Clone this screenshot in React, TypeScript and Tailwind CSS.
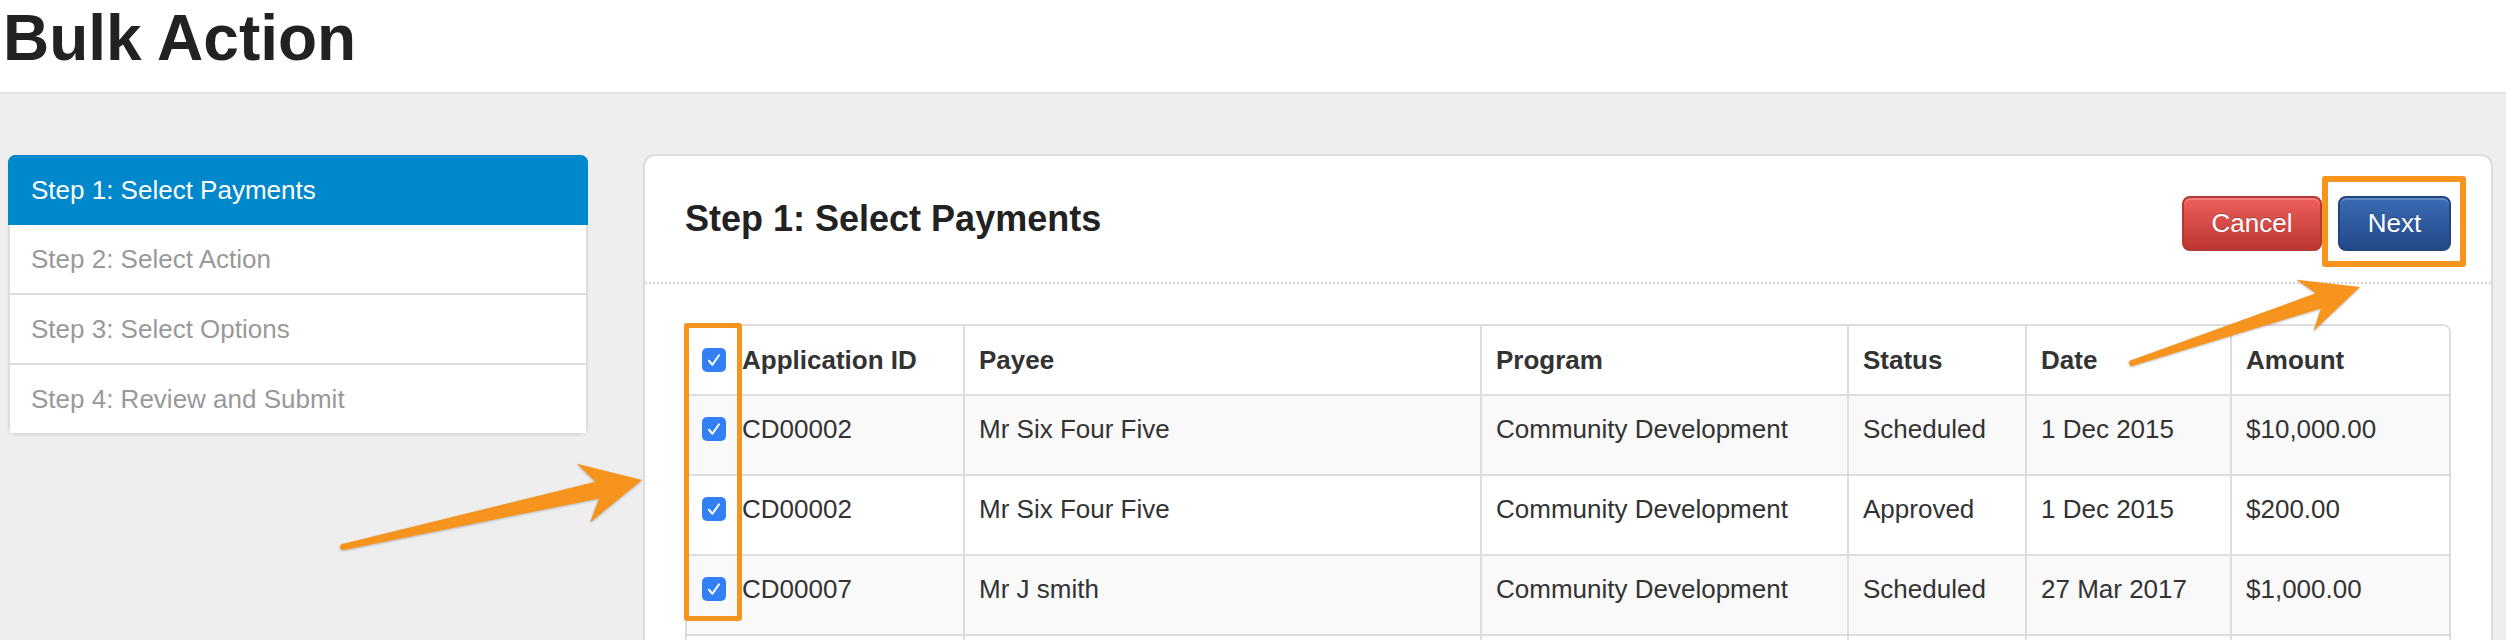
import React from 'react';

const steps = [
  'Step 1: Select Payments',
  'Step 2: Select Action',
  'Step 3: Select Options',
  'Step 4: Review and Submit',
];

const payments = [
  { id: 'CD00002', payee: 'Mr Six Four Five', program: 'Community Development', status: 'Scheduled', date: '1 Dec 2015', amount: '$10,000.00' },
  { id: 'CD00002', payee: 'Mr Six Four Five', program: 'Community Development', status: 'Approved', date: '1 Dec 2015', amount: '$200.00' },
  { id: 'CD00007', payee: 'Mr J smith', program: 'Community Development', status: 'Scheduled', date: '27 Mar 2017', amount: '$1,000.00' },
];

type Pt = [number, number];

// tapered annotation arrow, tail -> tip
function arrowPoints(tail: Pt, tip: Pt, headLen: number, headHalf: number, neck: number, shaftW: number, tailW: number) {
  const dx = tip[0] - tail[0];
  const dy = tip[1] - tail[1];
  const len = Math.hypot(dx, dy);
  const ux = dx / len;
  const uy = dy / len;
  const nx = -uy;
  const ny = ux;
  const at = (back: number, side: number): Pt => [tip[0] - ux * back + nx * side, tip[1] - uy * back + ny * side];
  const pts: Pt[] = [
    tip,
    at(headLen, headHalf),
    at(neck, shaftW / 2),
    [tail[0] + nx * (tailW / 2), tail[1] + ny * (tailW / 2)],
    [tail[0] - nx * (tailW / 2), tail[1] - ny * (tailW / 2)],
    at(neck, -shaftW / 2),
    at(headLen, -headHalf),
  ];
  return pts.map((p) => p.map((v) => v.toFixed(1)).join(',')).join(' ');
}

function Tick() {
  return (
    <span className="inline-flex h-[24px] w-[24px] shrink-0 items-center justify-center rounded-[5px] bg-[#3380f6]">
      <svg viewBox="0 0 24 24" className="h-[22px] w-[22px]" fill="none" stroke="white" strokeWidth={2.2} strokeLinecap="round" strokeLinejoin="round">
        <path d="M6.5 12.8l3.8 4.4L17.5 6.8" />
      </svg>
    </span>
  );
}

export default function App() {
  const cell = 'border-l-2 border-[#dddddd] px-[14px] text-left';

  return (
    <div className="relative h-[640px] w-[2506px] overflow-hidden bg-[#eeeeee] font-['Liberation_Sans',Arial,sans-serif] text-[#333333]">
      {/* Page title */}
      <div className="h-[94px] border-b-2 border-[#e3e3e3] bg-white pl-[3px] pt-[6px]">
        <h1 className="text-[64px] font-bold leading-[64px] text-[#222222]">Bulk Action</h1>
      </div>

      <div className="flex items-start gap-[55px] pl-[8px] pr-[13px] pt-[61px]">
        {/* Wizard steps */}
        <div className="w-[580px] shrink-0 overflow-hidden rounded-[8px] bg-white shadow-[0_1px_2px_rgba(0,0,0,0.06)]">
          {steps.map((step, i) => (
            <div
              key={step}
              className={
                i === 0
                  ? 'flex h-[70px] items-center border-2 border-[#0088cc] bg-[#0088cc] pl-[21px] text-[26px] text-white'
                  : 'flex h-[70px] items-center border-x-2 border-b-2 border-[#dddddd] pl-[21px] text-[26px] text-[#999999]'
              }
            >
              {step}
            </div>
          ))}
        </div>

        {/* Main panel */}
        <div className="-mt-[1px] flex-1 rounded-[12px] border-2 border-[#dcdcdc] bg-white">
          <div className="flex h-[128px] items-center justify-between border-b-2 border-dotted border-[#d3d3d3] px-[40px]">
            <h2 className="text-[36px] font-bold text-[#222222]">Step 1: Select Payments</h2>
            <div className="mt-[9px] flex gap-[16px]">
              <button className="flex h-[55px] w-[140px] items-center justify-center rounded-[8px] border-2 border-[#b33a33] bg-linear-to-b from-[#ee5f5b] to-[#bd362f] text-[26px] text-white shadow-[inset_0_2px_0_rgba(255,255,255,0.2)] [text-shadow:0_-1px_0_rgba(0,0,0,0.25)]">
                Cancel
              </button>
              <div className="relative">
                <button className="flex h-[55px] w-[113px] items-center justify-center rounded-[8px] border-2 border-[#21477f] bg-linear-to-b from-[#3a6bb3] to-[#24498a] text-[26px] text-white shadow-[inset_0_2px_0_rgba(255,255,255,0.2)] [text-shadow:0_-1px_0_rgba(0,0,0,0.25)]">
                  Next
                </button>
                <div className="pointer-events-none absolute -left-[16px] -top-[20px] h-[91px] w-[144px] rounded-[3px] border-[6px] border-[#f7941e]" />
              </div>
            </div>
          </div>

          <div className="px-[40px] pt-[40px]">
            <div className="relative">
              <div className="overflow-hidden rounded-[8px] border-2 border-[#dddddd]">
                <table className="w-full table-fixed border-separate border-spacing-0 text-[26px]">
                  <thead>
                    <tr className="bg-white">
                      <th className="h-[68px] w-[276px] pl-[15px] text-left font-bold">
                        <div className="flex items-center">
                          <Tick />
                          <span className="ml-[16px]">Application ID</span>
                        </div>
                      </th>
                      <th className={`${cell} w-[517px] font-bold`}>Payee</th>
                      <th className={`${cell} w-[367px] font-bold`}>Program</th>
                      <th className={`${cell} w-[178px] font-bold`}>Status</th>
                      <th className={`${cell} w-[205px] font-bold`}>Date</th>
                      <th className={`${cell} font-bold`}>Amount</th>
                    </tr>
                  </thead>
                  <tbody>
                    {payments.map((p, i) => (
                      <tr key={i} className={i % 2 === 0 ? 'bg-[#f9f9f9]' : 'bg-white'}>
                        <td className="h-[80px] border-t-2 border-[#dddddd] pb-[12px] pl-[15px]">
                          <div className="flex items-center">
                            <Tick />
                            <span className="ml-[16px]">{p.id}</span>
                          </div>
                        </td>
                        <td className={`${cell} border-t-2 pb-[12px]`}>{p.payee}</td>
                        <td className={`${cell} border-t-2 pb-[12px]`}>{p.program}</td>
                        <td className={`${cell} border-t-2 pb-[12px]`}>{p.status}</td>
                        <td className={`${cell} border-t-2 pb-[12px]`}>{p.date}</td>
                        <td className={`${cell} border-t-2 pb-[12px]`}>{p.amount}</td>
                      </tr>
                    ))}
                    {/* next row, below the fold */}
                    <tr className="bg-white">
                      <td className="h-[80px] border-t-2 border-[#dddddd]" />
                      <td className={`${cell} border-t-2`} />
                      <td className={`${cell} border-t-2`} />
                      <td className={`${cell} border-t-2`} />
                      <td className={`${cell} border-t-2`} />
                      <td className={`${cell} border-t-2`} />
                    </tr>
                  </tbody>
                </table>
              </div>
              {/* highlight around the checkbox column */}
              <div className="pointer-events-none absolute -left-[1px] -top-[1px] h-[298px] w-[58px] rounded-[3px] border-[5px] border-[#f7941e]" />
            </div>
          </div>
        </div>
      </div>

      {/* annotation arrows */}
      <svg
        className="pointer-events-none absolute left-0 top-0 [filter:drop-shadow(0_1px_1px_rgba(0,0,0,0.25))]"
        width={2506}
        height={640}
        viewBox="0 0 2506 640"
      >
        <polygon points={arrowPoints([343, 547], [642, 480], 60, 30, 46, 17, 6)} fill="#f7941e" />
        <circle cx={343} cy={547} r={3} fill="#f7941e" />
        <polygon points={arrowPoints([2132, 363], [2360, 287], 58, 27, 44, 16, 6)} fill="#f7941e" />
        <circle cx={2132} cy={363} r={3} fill="#f7941e" />
      </svg>
    </div>
  );
}
